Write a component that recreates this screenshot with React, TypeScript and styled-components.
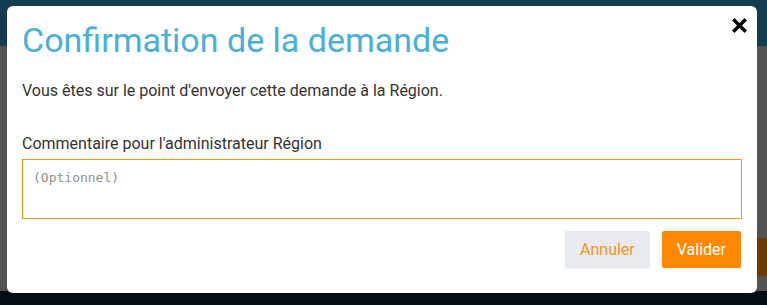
import * as React from "react"
import styled, { createGlobalStyle } from "styled-components"

const GlobalStyle = createGlobalStyle`
    html, body {
        margin: 0;
        padding: 0;
        width: 767px;
        height: 305px;
        overflow: hidden;
        font-family: Roboto, "Liberation Sans", sans-serif;
    }
`

// dimmed page behind the dialog
const Page = styled.div`
    position: relative;
    width: 767px;
    height: 305px;
    display: flex;
    flex-direction: column;
`
const TopBar = styled.div`
    height: 46px;
    background: #143c4f;
`
const PageBody = styled.div`
    flex: 1;
    background: #535353;
    display: flex;
    flex-direction: column;
    align-items: flex-end;
    padding-top: 192px;
`
const DimButton = styled.div`
    width: 10px;
    height: 38px;
    background: #6b3b06;
`
const PageFooter = styled.div`
    height: 14px;
    background: #040d12;
`

const Modal = styled.div`
    position: absolute;
    left: 7px;
    top: 6px;
    width: 750px;
    height: 287px;
    box-sizing: border-box;
    background: #ffffff;
    border-radius: 6px;
    padding: 14px 16px 25px 15px;
    display: flex;
    flex-direction: column;
`
const Header = styled.div`
    display: flex;
    justify-content: space-between;
    align-items: flex-start;
`
const Title = styled.h2`
    margin: 0;
    font-size: 34px;
    line-height: 40px;
    font-weight: 400;
    color: #4aafd7;
`
const CloseButton = styled.button`
    border: 0;
    background: none;
    padding: 0;
    margin: -2px -6px 0 0;
    width: 15px;
    height: 15px;
    cursor: pointer;
    display: flex;
`
const Message = styled.p`
    margin: 21px 0 0;
    font-size: 16px;
    line-height: 20px;
    color: #333333;
`
const Label = styled.label`
    display: block;
    margin-top: 33px;
    font-size: 16px;
    line-height: 20px;
    color: #333333;
`
const Comment = styled.textarea`
    display: block;
    margin-top: 5px;
    width: 720px;
    height: 60px;
    box-sizing: border-box;
    border: 1px solid #f7941d;
    padding: 9px 10px;
    resize: none;
    outline: none;
    font-family: "DejaVu Sans Mono", "Liberation Mono", monospace;
    font-size: 13px;
    line-height: 18px;
    color: #333;
    &::placeholder {
        color: #8f8f8f;
    }
`
const Footer = styled.div`
    margin-top: 12px;
    display: flex;
    justify-content: flex-end;
    gap: 12px;
`
const Button = styled.button<{ primary?: boolean }>`
    height: 37px;
    padding: 0 15px;
    border: 0;
    border-radius: 2px;
    font-family: Roboto, "Liberation Sans", sans-serif;
    font-size: 16px;
    background: ${p => p.primary ? "#ff8800" : "#e9eaed"};
    color: ${p => p.primary ? "#ffffff" : "#f7941d"};
    box-shadow: 0 1px 1px rgba(0, 0, 0, 0.08);
    cursor: pointer;
`

const CloseIcon = () =>
<svg width="15" height="15" viewBox="0 0 15 15">
    <path d="M2.5 2.5 L12.5 12.5 M12.5 2.5 L2.5 12.5" stroke="#000" strokeWidth="3.4" strokeLinecap="square" />
</svg>

const App = () =>
<>
    <GlobalStyle />
    <Page>
        <TopBar />
        <PageBody>
            <DimButton />
        </PageBody>
        <PageFooter />
        <Modal>
            <Header>
                <Title>Confirmation de la demande</Title>
                <CloseButton aria-label="Fermer"><CloseIcon /></CloseButton>
            </Header>
            <Message>Vous êtes sur le point d'envoyer cette demande à la Région.</Message>
            <Label htmlFor="comment">Commentaire pour l'administrateur Région</Label>
            <Comment id="comment" placeholder="(Optionnel)" />
            <Footer>
                <Button>Annuler</Button>
                <Button primary>Valider</Button>
            </Footer>
        </Modal>
    </Page>
</>

export default App
